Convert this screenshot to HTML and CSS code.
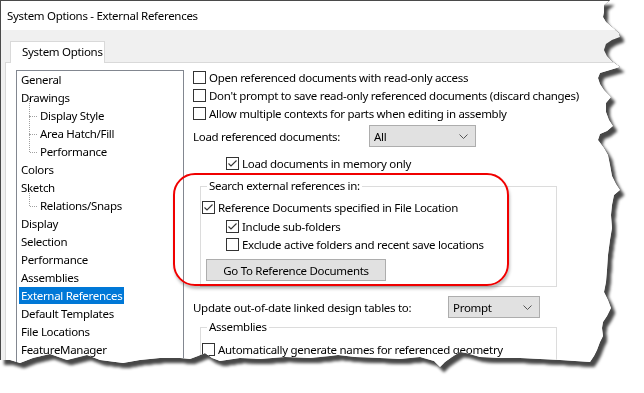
FILE: index.html
```html
<!DOCTYPE html>
<html lang="en">

<head>
    <meta charset="UTF-8">
    <title>System Options - External References</title>
    <link rel="stylesheet" href="styles.css">
</head>

<body>
    <div class="paper">
        <div class="dialog">
            <div class="titlebar">System Options - External References</div>
            <div class="tabstrip">
                <div class="tab">System Options</div>
            </div>
            <div class="panel">
                <ul class="tree">
                    <li><span>General</span></li>
                    <li><span>Drawings</span></li>
                    <li class="child"><span>Display Style</span></li>
                    <li class="child"><span>Area Hatch/Fill</span></li>
                    <li class="child last"><span>Performance</span></li>
                    <li><span>Colors</span></li>
                    <li><span>Sketch</span></li>
                    <li class="child last"><span>Relations/Snaps</span></li>
                    <li><span>Display</span></li>
                    <li><span>Selection</span></li>
                    <li><span>Performance</span></li>
                    <li><span>Assemblies</span></li>
                    <li class="selected"><span>External References</span></li>
                    <li><span>Default Templates</span></li>
                    <li><span>File Locations</span></li>
                    <li><span>FeatureManager</span></li>
                </ul>

                <div class="options">
                    <div class="check-row"><span class="box"></span>Open referenced documents with read-only access</div>
                    <div class="check-row"><span class="box"></span>Don't prompt to save read-only referenced documents (discard changes)</div>
                    <div class="check-row"><span class="box"></span>Allow multiple contexts for parts when editing in assembly</div>

                    <div class="field-row load-row">
                        <span class="label load-label">Load referenced documents:</span>
                        <div class="select select-all">All
                            <svg class="chevron" width="9" height="5" viewBox="0 0 9 5"><path d="M0.5 0.5 L4.5 4.5 L8.5 0.5" fill="none" stroke="#555" stroke-width="1"/></svg>
                        </div>
                    </div>

                    <div class="check-row indent memory-row"><span class="box checked"><svg width="11" height="11" viewBox="0 0 11 11"><path d="M1.5 5.5 L4 8 L9.5 2.5" fill="none" stroke="#333" stroke-width="1.1"/></svg></span>Load documents in memory only</div>

                    <fieldset class="group search-group">
                        <legend>Search external references in:</legend>
                        <div class="check-row"><span class="box checked"><svg width="11" height="11" viewBox="0 0 11 11"><path d="M1.5 5.5 L4 8 L9.5 2.5" fill="none" stroke="#333" stroke-width="1.1"/></svg></span>Reference Documents specified in File Location</div>
                        <div class="check-row sub sub-first"><span class="box checked"><svg width="11" height="11" viewBox="0 0 11 11"><path d="M1.5 5.5 L4 8 L9.5 2.5" fill="none" stroke="#333" stroke-width="1.1"/></svg></span>Include sub-folders</div>
                        <div class="check-row sub"><span class="box"></span>Exclude active folders and recent save locations</div>
                        <button class="btn">Go To Reference Documents</button>
                    </fieldset>

                    <div class="field-row update-row">
                        <span class="label update-label">Update out-of-date linked design tables to:</span>
                        <div class="select select-prompt">Prompt
                            <svg class="chevron" width="9" height="5" viewBox="0 0 9 5"><path d="M0.5 0.5 L4.5 4.5 L8.5 0.5" fill="none" stroke="#555" stroke-width="1"/></svg>
                        </div>
                    </div>

                    <fieldset class="group asm-group">
                        <legend>Assemblies</legend>
                        <div class="check-row"><span class="box"></span>Automatically generate names for referenced geometry</div>
                    </fieldset>
                </div>
            </div>

            <!-- red callout drawn over the search group -->
            <div class="callout"></div>
        </div>
    </div>
</body>

</html>
```

FILE: styles.css
```css
* {
    margin: 0;
    padding: 0;
    box-sizing: border-box;
}

body {
    background-color: #FFFFFF;
    font-family: "Noto Sans", "Open Sans", sans-serif;
    font-size: 11.5px;
    letter-spacing: -0.3px;
    color: #000000;
}

/* torn paper look */
.paper {
    width: 644px;
    height: 393px;
    filter: drop-shadow(0 0 0.6px #1a1a1a) drop-shadow(4px 5px 1.5px rgba(0, 0, 0, 0.72));
}

.dialog {
    position: relative;
    width: 625px;
    height: 372px;
    background-color: #F0F0F0;
    border-left: 1px solid #4A4A4A;
    border-top: 1px solid #4A4A4A;
    overflow: hidden;
    clip-path: polygon(0 0, 610px 0, 604px 5px, 604px 12px, 603px 17px, 606px 22px, 612px 27px, 619px 33px, 620px 37px,
            612px 40px, 606px 44px, 604px 50px, 607px 56px, 613px 62px, 620px 67px, 610px 70px, 600px 73px, 598px 78px,
            600px 84px, 604px 90px, 611px 97px, 606px 103px, 606px 112px, 609px 120px, 613px 126px, 607px 131px,
            600px 134px, 598px 140px, 604px 148px, 608px 155px, 610px 165px, 612px 176px, 616px 184px, 620px 190px,
            614px 195px, 612px 205px, 611px 215px, 612px 228px, 610px 240px, 608px 255px, 607px 270px, 606px 282px,
            604px 292px, 608px 300px, 611px 308px, 607px 316px, 603px 322px, 602px 328px, 603px 336px, 600px 342px,
            597px 350px, 594px 356px, 590px 362px, 575px 361px, 560px 360px, 540px 359px, 520px 358px, 500px 358px,
            480px 357px, 466px 353px, 460px 352px, 452px 357px, 445px 362px, 440px 367px, 434px 361px, 420px 357px,
            400px 359px, 380px 358px, 355px 357px, 338px 355px, 330px 356px, 310px 358px, 285px 357px, 260px 359px,
            240px 358px, 220px 361px, 212px 358px, 205px 353px, 198px 356px, 190px 359px, 180px 358px, 160px 358px,
            140px 360px, 123px 363px, 100px 360px, 87px 355px, 67px 360px, 50px 354px, 33px 358px, 20px 363px,
            10px 360px, 0 360px);
}

.titlebar {
    height: 29px;
    line-height: 29px;
    padding-left: 6px;
    background-color: #FFFFFF;
    white-space: nowrap;
}

.tabstrip {
    height: 32px;
    padding: 11px 0 0 9px;
}

.tab {
    position: relative;
    z-index: 1;
    width: 95px;
    height: 22px;
    line-height: 20px;
    padding-left: 11px;
    white-space: nowrap;
    background-color: #FFFFFF;
    border: 1px solid #D9D9D9;
    border-bottom: none;
}

.panel {
    display: flex;
    height: 320px;
    margin-left: 4px;
    padding: 7px 0 0 10px;
    background-color: #FFFFFF;
    border-top: 1px solid #D9D9D9;
    border-left: 1px solid #D9D9D9;
}

/* left tree */
.tree {
    list-style: none;
    flex-shrink: 0;
    width: 168px;
    height: 320px;
    border: 1px solid #828790;
}

.tree li {
    position: relative;
    height: 18px;
    line-height: 17px;
    padding-left: 2px;
    white-space: nowrap;
}

.tree li span {
    display: inline-block;
    padding: 0 2px;
}

.tree li.child {
    padding-left: 21px;
}

.tree li.child::before {
    content: "";
    position: absolute;
    left: 12px;
    top: -9px;
    height: 18px;
    border-left: 1px dotted #A0A0A0;
}

.tree li.child::after {
    content: "";
    position: absolute;
    left: 13px;
    top: 9px;
    width: 7px;
    border-top: 1px dotted #A0A0A0;
}

.tree li.selected span {
    background-color: #0078D7;
    color: #FFFFFF;
}

/* right side options */
.options {
    margin: -2px 0 0 9px;
    width: 370px;
}

.check-row {
    display: flex;
    align-items: center;
    height: 18px;
    white-space: nowrap;
}

.box {
    display: inline-flex;
    align-items: center;
    justify-content: center;
    flex-shrink: 0;
    width: 13px;
    height: 13px;
    margin-right: 3px;
    border: 1px solid #333333;
    background-color: #FFFFFF;
}

.field-row {
    display: flex;
    align-items: center;
    height: 22px;
    white-space: nowrap;
}

.load-row {
    margin-top: 3px;
}

.load-label {
    width: 176px;
}

.update-row {
    margin-top: 9px;
}

.update-label {
    width: 255px;
}

.select {
    display: flex;
    align-items: center;
    justify-content: space-between;
    height: 22px;
    padding: 0 7px 0 4px;
    background-color: #E1E1E1;
    border: 1px solid #ADADAD;
}

.select-all {
    width: 107px;
}

.select-prompt {
    width: 92px;
}

.indent {
    padding-left: 33px;
}

.memory-row {
    margin-top: 7px;
}

.group {
    width: 357px;
    margin: 5px 0 0 7px;
    padding: 3px 0 5px 1px;
    border: 1px solid #DCDCDC;
}

.group legend {
    margin-left: 5px;
    padding: 0 2px;
    line-height: 18px;
}

.sub {
    padding-left: 24px;
}

.sub-first {
    margin-top: 1px;
}

.btn {
    display: block;
    width: 180px;
    height: 22px;
    margin: 6px 0 0 4px;
    font-family: inherit;
    font-size: inherit;
    letter-spacing: inherit;
    color: #000000;
    background-color: #E1E1E1;
    border: 1px solid #ADADAD;
}

.asm-group {
    margin-top: 0;
    padding-top: 4px;
    height: 60px;
}

.callout {
    position: absolute;
    left: 172px;
    top: 172px;
    width: 336px;
    height: 113px;
    border: 2px solid #F00000;
    border-radius: 22px;
    box-shadow: 1px 3px 3px rgba(0, 0, 0, 0.25);
}
```
